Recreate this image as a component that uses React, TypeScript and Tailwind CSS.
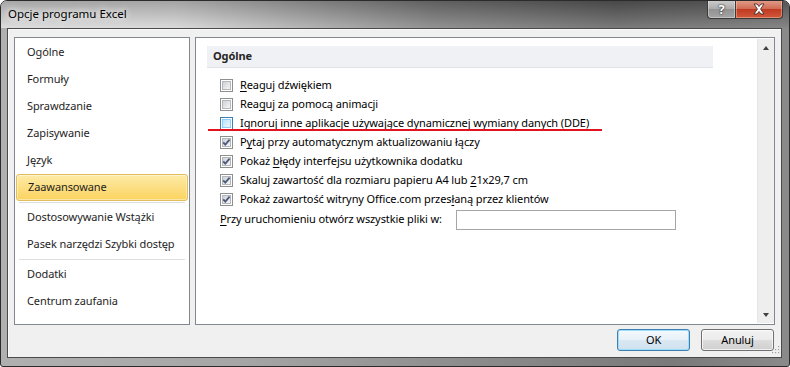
import React from "react";

type Mark = "off" | "hover" | "on";

const opcje: { mark: Mark; przed: string; klawisz: string; po: string }[] = [
  { mark: "off", przed: "", klawisz: "R", po: "eaguj dźwiękiem" },
  { mark: "off", przed: "Rea", klawisz: "g", po: "uj za pomocą animacji" },
  {
    mark: "hover",
    przed: "Ignor",
    klawisz: "u",
    po: "j inne aplikacje używające dynamicznej wymiany danych (DDE)",
  },
  { mark: "on", przed: "P", klawisz: "y", po: "taj przy automatycznym aktualizowaniu łączy" },
  { mark: "on", przed: "Pokaż ", klawisz: "b", po: "łędy interfejsu użytkownika dodatku" },
  {
    mark: "on",
    przed: "Skaluj zawartość dla rozmiaru papieru A4 lub ",
    klawisz: "2",
    po: "1x29,7 cm",
  },
  {
    mark: "on",
    przed: "Pokaż zawartość witryny Office.com przes",
    klawisz: "ł",
    po: "aną przez klientów",
  },
];

const kategorie = [
  ["Ogólne", "Formuły", "Sprawdzanie", "Zapisywanie", "Język", "Zaawansowane"],
  ["Dostosowywanie Wstążki", "Pasek narzędzi Szybki dostęp"],
  ["Dodatki", "Centrum zaufania"],
];

function CheckBox({ mark }: { mark: Mark }) {
  const hover = mark === "hover";
  return (
    <span
      className={`relative flex h-[13px] w-[13px] shrink-0 border bg-white p-px ${
        hover ? "border-[#3c7fb1]" : "border-[#8e8f8f]"
      }`}
    >
      <span
        className={`flex-1 border ${
          hover
            ? "border-[#8fcdf6] bg-[linear-gradient(135deg,#b9e2fb,#eaf7fe)]"
            : "border-[#b4b8bd] bg-[linear-gradient(135deg,#cdd1d6,#f6f6f6)]"
        }`}
      />
      {mark === "on" && (
        <svg viewBox="0 0 13 13" className="absolute -left-px -top-px h-[13px] w-[13px]">
          <path d="M3.2 6.4 L5.3 8.7 L9.6 3.6" fill="none" stroke="#4c5b7d" strokeWidth="1.8" />
        </svg>
      )}
    </span>
  );
}

const App = () => {
  return (
    <div className="flex h-[367px] w-[790px] flex-col overflow-hidden rounded-t-[7px] rounded-b-[3px] border border-[#2b2b2b] bg-[linear-gradient(to_right,#b0b0b0_0%,#a6a6a6_30%,#8c8c8c_60%,#7a7a7a_85%,#8a8a8a_100%)] font-['Segoe_UI','Noto_Sans',sans-serif] text-[11px] tracking-[-0.1px] text-[#1e1e1e]">
      {/* pasek tytułu */}
      <div className="flex h-[27px] shrink-0 justify-between bg-[linear-gradient(to_bottom,rgba(0,0,0,0.22),rgba(255,255,255,0.18)),linear-gradient(to_right,#d6d6d6_0%,#d2d2d2_22%,#a6a6a6_38%,#7a7a7a_55%,#5c5c5c_78%,#6c6c6c_100%)]">
        <span className="pl-[7px] pt-[5px] text-[11.5px] leading-[16px] tracking-normal text-black [text-shadow:0_0_6px_#fff,0_0_10px_#fff]">
          Opcje programu Excel
        </span>
        <div className="-mt-px mr-[6px] flex h-[19px]">
          <div className="flex w-[29px] items-center justify-center rounded-bl-[4px] border border-t-0 border-[#3a3a3a] bg-[linear-gradient(to_bottom,#cfcfcf,#ababab_50%,#929292_51%,#a4a4a4)] shadow-[inset_0_0_0_1px_rgba(255,255,255,0.35)]">
            <span className="text-[13px] font-bold leading-none text-white [text-shadow:0_0_1px_#222,0_0_2px_#222]">
              ?
            </span>
          </div>
          <div className="flex w-[47px] items-center justify-center rounded-br-[4px] border border-l-0 border-t-0 border-[#3a3a3a] bg-[linear-gradient(to_bottom,#e2a08d,#cf6a52_50%,#c03a22_51%,#d2593a)] shadow-[inset_0_0_0_1px_rgba(255,220,200,0.4)]">
            <svg viewBox="0 0 14 12" className="h-[12px] w-[14px]">
              <path
                d="M2 1 L5 1 L7 3.5 L9 1 L12 1 L8.6 6 L12 11 L9 11 L7 8.5 L5 11 L2 11 L5.4 6 Z"
                fill="#fff"
                stroke="#4a2a24"
                strokeWidth="0.9"
                strokeLinejoin="round"
              />
            </svg>
          </div>
        </div>
      </div>

      {/* obszar klienta */}
      <div className="relative mb-[8px] ml-[6px] mr-[7px] flex flex-1 flex-col border border-[#4a4a4a] bg-[#f0f0f0] px-[6px] pb-[6px] pt-[8px] shadow-[inset_1px_1px_0_#fbfbfb]">
        <div className="flex h-[288px] gap-[5px]">
          {/* lista kategorii */}
          <div className="flex w-[176px] flex-col border border-[#828790] bg-white px-px pt-px">
            {kategorie.map((grupa, gi) => (
              <div key={gi} className="flex flex-col">
                {gi > 0 && <div className="mx-[3px] my-px h-px bg-[#dedede]" />}
                {grupa.map((nazwa) => {
                  const wybrana = nazwa === "Zaawansowane";
                  return (
                    <div
                      key={nazwa}
                      className={`flex h-[27px] items-center whitespace-nowrap pl-[11px] ${
                        wybrana
                          ? "rounded-[3px] border border-[#e2bd5c] bg-[linear-gradient(to_bottom,#fdeba8,#fcdc7c_60%,#fbd35f)] pl-[10px] shadow-[inset_0_0_0_1px_rgba(255,255,255,0.45)]"
                          : ""
                      }`}
                    >
                      {nazwa}
                    </div>
                  );
                })}
              </div>
            ))}
          </div>

          {/* panel ustawień */}
          <div className="relative flex flex-1 border border-[#828790] bg-white">
            <div className="flex flex-1 flex-col pl-[11px] pt-[8px]">
              <div className="flex h-[22px] w-[506px] items-center border-b border-[#e2e3e6] bg-[#f0f1f4] pl-[6px] font-bold text-[#262626]">
                Ogólne
              </div>
              <div className="mt-[8px] flex flex-col pl-[13px]">
                {opcje.map((o, i) => (
                  <div key={i} className="flex h-[19px] items-center gap-[7px] text-black">
                    <CheckBox mark={o.mark} />
                    <span className="whitespace-nowrap">
                      {o.przed}
                      <span className="underline underline-offset-2">{o.klawisz}</span>
                      {o.po}
                    </span>
                  </div>
                ))}
                <div className="flex h-[21px] items-center text-black">
                  <span className="w-[236px] whitespace-nowrap">
                    <span className="underline underline-offset-2">P</span>
                    rzy uruchomieniu otwórz wszystkie pliki w:
                  </span>
                  <div className="h-[20px] w-[220px] border border-[#a6a6a6] bg-white" />
                </div>
              </div>
            </div>

            {/* pasek przewijania (nieaktywny) */}
            <div className="my-px flex w-[17px] flex-col justify-between border-l border-[#e6e6e6] bg-[#eeeeee]">
              <div className="flex h-[17px] items-center justify-center">
                <span className="h-0 w-0 border-x-[3.5px] border-b-[4px] border-x-transparent border-b-[#404040]" />
              </div>
              <div className="flex h-[17px] items-center justify-center">
                <span className="h-0 w-0 border-x-[3.5px] border-t-[4px] border-x-transparent border-t-[#404040]" />
              </div>
            </div>

            {/* czerwone podkreślenie */}
            <div className="absolute left-[12px] top-[91px] h-[2px] w-[394px] bg-[#e3121f]" />
          </div>
        </div>

        {/* przyciski */}
        <div className="mt-[4px] flex justify-end gap-[11px] pr-px">
          <button className="h-[22px] w-[73px] rounded-[3px] border border-[#3c7fb1] bg-[linear-gradient(to_bottom,#f4f9fc,#e7f1f8_50%,#d9e8f3_51%,#cfe1ee)] text-black shadow-[inset_0_0_0_1px_#9fdcf7]">
            OK
          </button>
          <button className="h-[22px] w-[73px] rounded-[3px] border border-[#707070] bg-[linear-gradient(to_bottom,#f2f2f2,#ebebeb_50%,#dddddd_51%,#cfcfcf)] text-black shadow-[inset_0_0_0_1px_rgba(255,255,255,0.7)]">
            Anuluj
          </button>
        </div>

        {/* uchwyt zmiany rozmiaru */}
        <svg viewBox="0 0 10 10" className="absolute bottom-[3px] right-[1px] h-[10px] w-[10px]">
          {[
            [8, 2],
            [5, 5],
            [8, 5],
            [2, 8],
            [5, 8],
            [8, 8],
          ].map(([x, y], i) => (
            <rect key={i} x={x} y={y} width="1.2" height="1.2" fill="#a0a0a0" />
          ))}
        </svg>
      </div>
    </div>
  );
};

export default App;
